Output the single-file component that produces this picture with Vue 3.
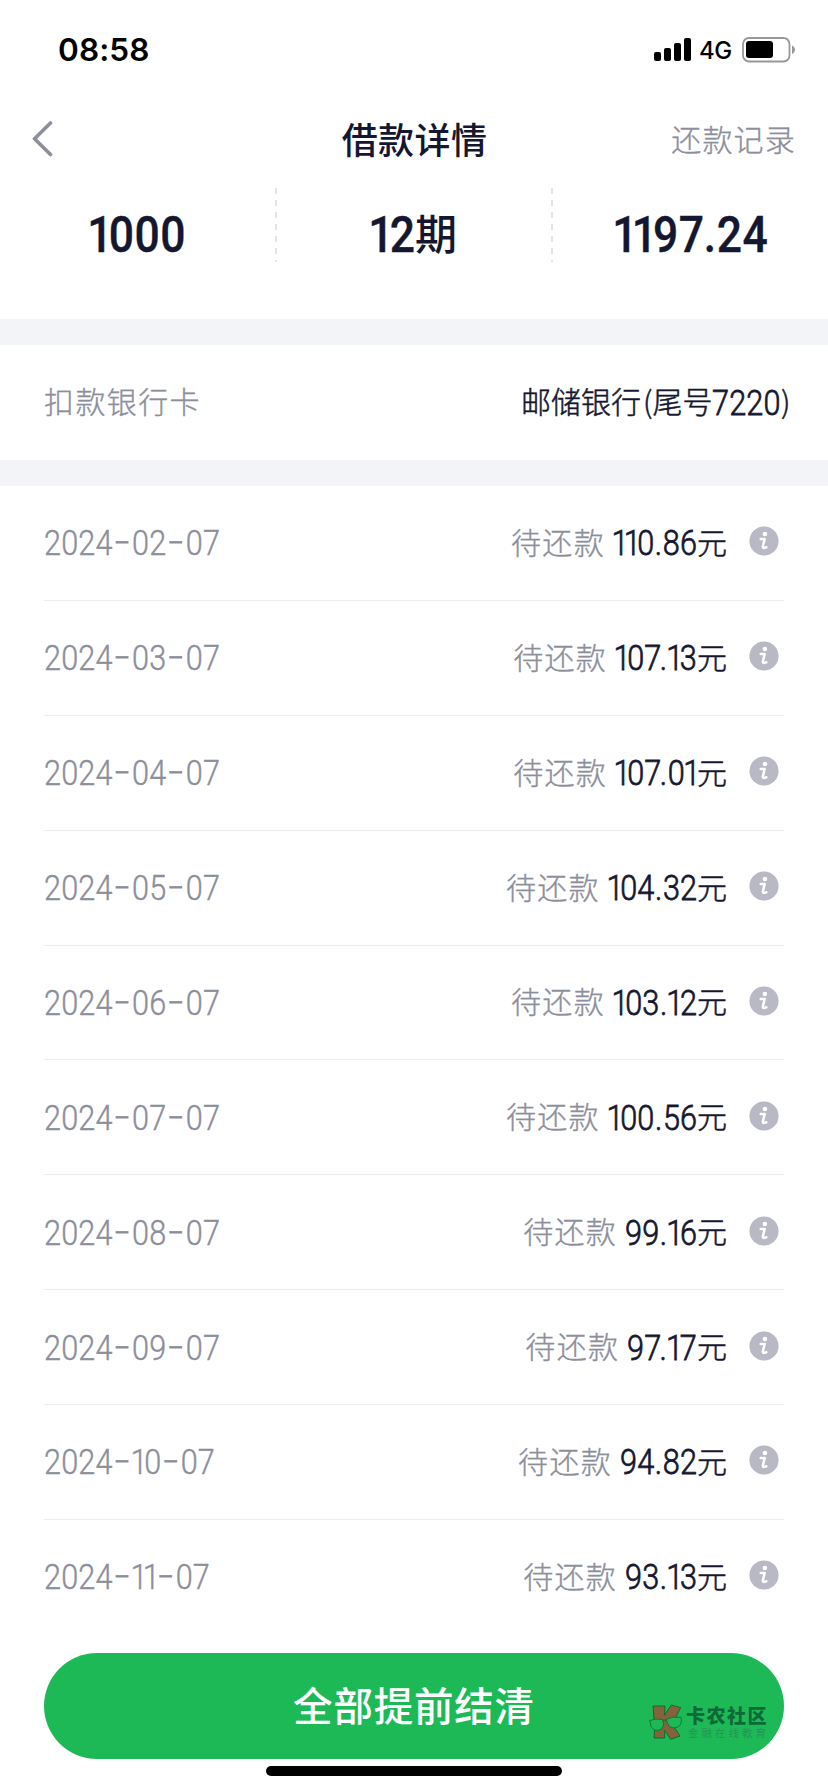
<script setup>
import { h } from 'vue'

const rows = [
  { date: '2024-02-07', amount: '110.86' },
  { date: '2024-03-07', amount: '107.13' },
  { date: '2024-04-07', amount: '107.01' },
  { date: '2024-05-07', amount: '104.32' },
  { date: '2024-06-07', amount: '103.12' },
  { date: '2024-07-07', amount: '100.56' },
  { date: '2024-08-07', amount: '99.16' },
  { date: '2024-09-07', amount: '97.17' },
  { date: '2024-10-07', amount: '94.82' },
  { date: '2024-11-07', amount: '93.13' },
]

// Condensed proportional digits: every glyph is centred in its own cell.
const sizes = {
  small: { font: 35.2, scale: 0.87, digit: 17.15, one: 12.1, dot: 8.4, dash: 19.4, kern: 2.2, nudge: 1 },
  large: { font: 50.5, scale: 0.88, digit: 25.8, one: 19.4, dot: 13, dash: 28, kern: 1, nudge: 1.2 },
}

function Digits(props) {
  const m = sizes[props.size || 'small']
  let pos = 0
  const glyphs = [...props.text].map((ch, i) => {
    const w = ch === '1' ? m.one : ch === '.' ? m.dot : ch === '-' ? m.dash : m.digit
    if (ch === '.' && props.text[i - 1] === '7') pos -= m.kern
    const x = (pos + w / 2 + (ch === '1' ? m.nudge : 0)) / m.scale
    pos += w
    const dash = ch === '-'
    return h('tspan', { x, y: dash ? 31.5 : m.font * 0.711, class: dash ? 'dash' : null }, ch)
  })
  return h('svg', { class: 'digits', width: pos, height: m.font * 0.711 }, [
    h('text', { transform: `scale(${m.scale} 1)`, 'font-size': m.font }, glyphs),
  ])
}
Digits.props = ['text', 'size']
</script>

<template>
  <div class="screen">
    <header class="status">
      <span class="time">08:58</span>
      <div class="signals">
        <svg width="38" height="24" viewBox="0 0 38 24">
          <rect x="0" y="14" width="7" height="9" rx="2" />
          <rect x="10" y="10" width="7" height="13" rx="2" />
          <rect x="20" y="5" width="7" height="18" rx="2" />
          <rect x="30" y="0" width="7" height="23" rx="2" />
        </svg>
        <span class="net">4G</span>
        <svg class="battery" width="54" height="26" viewBox="0 0 54 26">
          <rect x="1" y="1" width="46.5" height="23.5" rx="6" fill="none" stroke="#98989b" stroke-width="1.8" />
          <rect x="4" y="4" width="27" height="17" rx="3" />
          <path d="M50 8.5c4 2 4 6.500 0 8.500z" fill="#98989b" />
        </svg>
      </div>
    </header>

    <nav class="nav">
      <svg class="back" width="22" height="38" viewBox="0 0 22 38">
        <path d="M18.500 3L2.500 18.700L18.500 34.500" fill="none" stroke="#8c8e9b" stroke-width="3.600" stroke-linecap="round" stroke-linejoin="round" />
      </svg>
      <h1>借款详情</h1>
      <span class="record">还款记录</span>
    </nav>

    <section class="summary">
      <div class="cell"><Digits text="1000" size="large" /></div>
      <div class="cell"><Digits text="12" size="large" /><span class="term">期</span></div>
      <div class="cell last"><Digits text="1197.24" size="large" /></div>
    </section>

    <section class="bank">
      <span class="label">扣款银行卡</span>
      <span class="card"><span class="cjk">邮储银行<i>(</i>尾号</span><Digits class="dark" text="7220" /><i class="close">)</i></span>
    </section>

    <ul class="plan">
      <li v-for="row in rows" :key="row.date">
        <Digits class="date" :text="row.date" />
        <span class="state">待还款</span>
        <Digits class="dark" :text="row.amount" />
        <span class="yuan">元</span>
        <svg class="info" width="30" height="30" viewBox="0 0 30 30">
          <circle cx="15" cy="15" r="14.600" fill="#b8b9c4" />
          <circle cx="15.900" cy="8" r="2.300" fill="#fff" />
          <path d="M11.700 13H15.700L13.900 20.300Q13.600 22.300 15.400 21.900L17.300 21.300" fill="none" stroke="#fff" stroke-width="2.500" stroke-linecap="round" stroke-linejoin="round" />
        </svg>
      </li>
    </ul>

    <footer class="footer">
      <button class="settle">全部提前结清</button>
      <div class="mark">
        <svg width="36" height="37" viewBox="0 0 108 111">
          <g fill="#84623a" stroke="#0d6b35" stroke-width="3" stroke-linejoin="round">
            <path d="M18 9H54L52 37L73 6L101 14L82 51L78 67L99 99L71 109L53 82V105H21L23 75Z" />
          </g>
          <g fill="#1eb957" stroke="#0d6b35" stroke-width="2.500">
            <path d="M7 53Q25 45 48 50Q53 67 44 78Q34 86 20 80Q9 72 10 58Z" />
            <path d="M58 49Q78 39 102 43Q106 61 95 71Q80 79 68 71Q60 62 58 49Z" />
            <path d="M47 54Q52 48 59 53" fill="none" />
          </g>
        </svg>
        <div class="words"><b>卡农社区</b><small>金融在线教育</small></div>
      </div>
      <div class="home"></div>
    </footer>
  </div>
</template>

<style>
body { margin: 0; background: #fff; }
.digits { display: block; overflow: visible; flex: none; font-family: Roboto, sans-serif; font-weight: 300; }
.digits text { fill: currentColor; stroke: currentColor; stroke-width: .4px; text-anchor: middle; }
.digits .dash { font-size: 60px; font-weight: 100; stroke-width: .9px; }
.digits.dark text { stroke-width: .75px; }
</style>

<style scoped>
.screen {
  width: 828px; height: 1792px; overflow: hidden; display: flex; flex-direction: column;
  background: #fff; color: #14172f; font-family: "Noto Sans CJK SC", sans-serif;
}
.status { height: 100px; flex: none; display: flex; justify-content: space-between; box-sizing: border-box; padding: 0 32px 0 58px; color: #000; font-family: Inter, sans-serif; }
.time { font-size: 31.500px; font-weight: 600; line-height: 100px; letter-spacing: .1px; }
.signals { display: flex; align-items: center; }
.net { font-size: 24px; font-weight: 500; margin: 1px 10px 0 7px; line-height: 30px; letter-spacing: -.3px; }
.nav { height: 88px; flex: none; display: grid; grid-template-columns: 1fr auto 1fr; align-items: center; padding: 0 33px 0 34px; box-sizing: border-box; }
.back { margin: 0 0 10px -2px; }
h1 { margin: 0 0 12px; font-size: 36px; line-height: 52px; font-weight: 500; letter-spacing: .4px; }
.record { justify-self: end; margin-bottom: 12px; font-size: 30px; letter-spacing: 1.200px; margin-right: -1px; color: #8c8e9b; }
.record, .label, .state { font-weight: 300; -webkit-text-stroke: .35px currentColor; }
.summary { height: 131px; flex: none; display: grid; grid-template-columns: 277px 276px 275px; }
.cell {
  height: 74px; display: flex; justify-content: center; align-items: center; padding: 18px 3px 0 0; box-sizing: border-box;
  background: repeating-linear-gradient(#e4e4e8 0 6px, transparent 6px 12px) right / 2px 74px no-repeat;
}
.cell.last { background: none; padding-right: 0; }
.cell .digits { font-weight: 500; }
.term { font-size: 42px; line-height: 50px; font-weight: 500; margin-top: -4px; }
.bank { height: 167px; box-sizing: border-box; flex: none; border: solid #f3f4f8; border-width: 26px 0; display: flex; align-items: center; justify-content: space-between; padding: 0 38px 0 44px; font-size: 30px; }
.label { color: #8c8e9b; letter-spacing: 1.400px; margin-top: -5px; }
.card { display: flex; align-items: center; }
.cjk, .yuan, .close { font-weight: 300; -webkit-text-stroke: .5px currentColor; margin-top: -5px; }
.card i { font-style: normal; margin-left: 2px; }
.card .close { width: 9px; margin-left: 0; }
.plan { margin: 0; padding: 0 44px; list-style: none; flex: none; }
.plan li { height: 114.875px; box-sizing: border-box; border-bottom: 1px solid #ececef; display: flex; align-items: center; padding-right: 5px; }
.plan li:last-child { border-color: transparent; }
.date { color: #8c8e9b; margin-right: auto; }
.state { color: #8c8e9b; font-size: 30px; letter-spacing: 1.300px; margin: -4px 8px 0 0; }
.yuan { font-size: 30px; margin-top: -4px; }
.info { margin: 0 0 3px 22px; }
.footer { position: relative; flex: 1; }
.settle { position: absolute; left: 44px; top: 18px; width: 740px; height: 106px; border: 0; border-radius: 53px; background: #1eb957; color: #fff; font: 500 39.500px "Noto Sans CJK SC", sans-serif; letter-spacing: .8px; padding: 0 0 4px; }
.mark { position: absolute; left: 647px; top: 68px; display: flex; gap: 3px; }
.words { display: flex; flex-direction: column; }
.words b { color: #0c6a37; font-size: 19px; line-height: 22px; font-weight: 900; letter-spacing: 1.500px; margin-top: 1px; }
.words small { color: #269554; font-size: 10.500px; line-height: 14px; letter-spacing: 3px; margin-left: 2px; }
.home { position: absolute; left: 266px; top: 131px; width: 296px; height: 10px; border-radius: 5px; background: #000; }
</style>
